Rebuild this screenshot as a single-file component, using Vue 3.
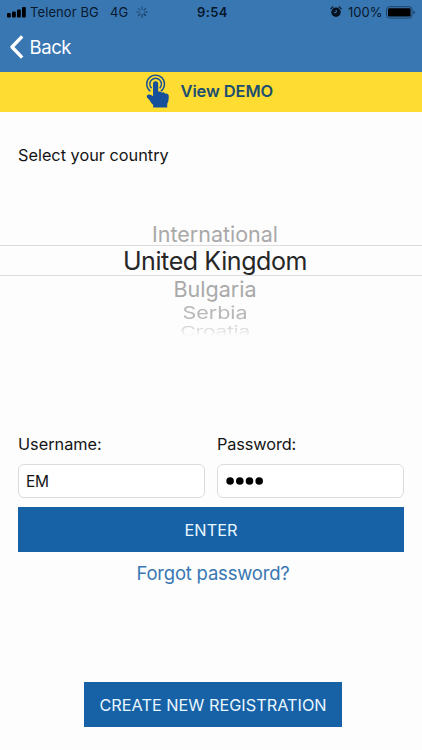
<script setup>
import { ref } from 'vue'

const countries = [
  { name: 'International', cls: 'above' },
  { name: 'United Kingdom', cls: 'selected' },
  { name: 'Bulgaria', cls: 'below' },
  { name: 'Serbia', cls: 'far' },
  { name: 'Croatia', cls: 'farthest' },
]
const username = ref('EM')
const spokes = [
  { angle: 0, opacity: 0.45 },
  { angle: 45, opacity: 0.5 },
  { angle: 90, opacity: 0.6 },
  { angle: 135, opacity: 0.8 },
  { angle: 180, opacity: 0.75 },
  { angle: 225, opacity: 0.6 },
  { angle: 270, opacity: 0.5 },
  { angle: 315, opacity: 0.35 },
]
</script>

<template>
  <div class="screen">
    <header class="top">
      <div class="status">
        <div class="carrier">
          <svg class="signal" width="19" height="11" viewBox="0 0 19 11">
            <rect x="0" y="6" width="3.8" height="4.4" rx="1" />
            <rect x="5" y="4.4" width="3.8" height="6" rx="1" />
            <rect x="10" y="2.4" width="3.8" height="8" rx="1" />
            <rect x="15" y="0" width="3.8" height="10.4" rx="1" />
          </svg>
          <span class="operator">Telenor BG</span>
          <span class="network">4G</span>
          <svg class="spinner" width="12" height="12" viewBox="-6 -6 12 12">
            <line
              v-for="s in spokes"
              :key="s.angle"
              x1="0" y1="-2.6" x2="0" y2="-5.2"
              stroke="#061426" stroke-width="1" stroke-linecap="round"
              :opacity="s.opacity"
              :transform="`rotate(${s.angle})`"
            />
          </svg>
        </div>
        <span class="clock">9:54</span>
        <div class="power">
          <svg class="alarm" width="12" height="12" viewBox="0 0 12 12">
            <circle cx="6" cy="6.2" r="4.7" fill="#07111d" />
            <path d="M0.9 2.7 L2.9 0.9 M11.1 2.7 L9.1 0.9" stroke="#07111d" stroke-width="1.2" stroke-linecap="round" />
            <path d="M6.2 3.8 V6.6 H4.1" fill="none" stroke="#3977b3" stroke-width="1" />
          </svg>
          <span class="percent">100%</span>
          <svg class="battery" width="30" height="13" viewBox="0 0 30 13">
            <rect x="0.5" y="0.7" width="25.6" height="11.4" rx="3" fill="none" stroke="#1d436b" stroke-width="1" />
            <rect x="2" y="2.2" width="22.6" height="8.4" rx="1.4" />
            <path d="M27.4 4.6 Q29 5.2 29 6.4 Q29 7.6 27.4 8.2 Z" fill="#1d436b" />
          </svg>
        </div>
      </div>
      <nav class="nav">
        <svg width="15" height="24" viewBox="0 0 15 24">
          <path d="M13.2 1.4 L3 12 L13.2 22.6" fill="none" stroke="#fff" stroke-width="3.4" stroke-linejoin="round" />
        </svg>
        <span class="back">Back</span>
      </nav>
    </header>

    <div class="demo">
      <svg class="tap" width="25" height="36" viewBox="0 0 25 36">
        <g fill="none" stroke="#17509a">
          <path d="M5.4 17.2 A8.9 8.9 0 1 1 15.8 17.2" stroke-width="1.4" />
          <path d="M6.6 14.2 A5.8 5.8 0 1 1 14.6 14.2" stroke-width="1.4" />
        </g>
        <path
          fill="#17509a"
          d="M8 10 Q8 7.3 10.6 7.3 Q13.2 7.3 13.2 10 V17.6 Q15.5 16.9 16.6 18.5 Q18.8 17.8 20 19.6 Q23.8 19.2 23.8 22.8 Q23.9 27 22.2 30 V33.6 H8.2 V31 Q5.8 28.8 4.2 25.8 L2 23.4 Q1.1 20.8 3.8 20.4 Q6 20.2 8 22.2 Z"
        />
      </svg>
      <span class="demo-text">View DEMO</span>
    </div>

    <main class="content">
      <p class="heading"><span>Select your country</span></p>
      <div class="picker">
        <div v-for="c in countries" :key="c.name" class="option" :class="c.cls">
          <span>{{ c.name }}</span>
        </div>
      </div>

      <form class="form" @submit.prevent>
        <label class="field">
          <span class="label user">Username:</span>
          <input v-model="username" class="input" type="text" />
        </label>
        <label class="field">
          <span class="label pass">Password:</span>
          <span class="input secret">
            <svg width="38" height="10" viewBox="0 0 38 10">
              <circle v-for="n in 4" :key="n" :cx="n * 9.7 - 5.6" cy="5" r="3.8" />
            </svg>
          </span>
        </label>
        <button class="enter" type="submit"><span>ENTER</span></button>
      </form>
      <a class="forgot"><span>Forgot password?</span></a>
      <button class="register"><span>CREATE NEW REGISTRATION</span></button>
    </main>
  </div>
</template>

<style>
body {
  margin: 0;
  background: #fdfdfd;
}
</style>

<style scoped>
.screen {
  width: 422px;
  height: 750px;
  overflow: hidden;
  box-sizing: border-box;
  display: flex;
  flex-direction: column;
  background: #fdfdfd;
  color: #141414;
  font-family: Inter, Roboto, sans-serif;
  white-space: nowrap;
}
.top {
  height: 72px;
  background: #3977b3;
}
.status {
  height: 24px;
  display: grid;
  grid-template-columns: 197px 1fr auto;
  align-items: center;
  color: #07182b;
  font-size: 13px;
  line-height: 24px;
}
.carrier {
  display: flex;
  align-items: center;
  padding-left: 7px;
}
.operator {
  margin-left: 4px;
  width: 80px;
  letter-spacing: 0.1px;
}
.network {
  width: 26px;
}
.clock {
  font-weight: 600;
  letter-spacing: 0.4px;
}
.power {
  display: flex;
  align-items: center;
  padding-right: 6px;
}
.percent {
  margin: 0 4px 0 6px;
  width: 34px;
}
.nav {
  height: 46px;
  display: flex;
  align-items: center;
  gap: 5.5px;
  padding-left: 9px;
  color: #fff;
  font-size: 18.5px;
  letter-spacing: -0.4px;
}
.demo {
  height: 39.5px;
  flex: none;
  display: flex;
  align-items: center;
  padding-left: 145px;
  background: #ffdc32;
  color: #1c4f70;
}
.demo-text {
  margin-left: 10.5px;
  margin-top: -1px;
  font-size: 16.5px;
  font-weight: 600;
  letter-spacing: -0.12px;
}
.content {
  flex: 1;
  display: flex;
  flex-direction: column;
}
.heading {
  margin: 31.5px 0 0 18px;
  height: 24px;
  line-height: 24px;
  font-size: 16.3px;
}
.picker {
  margin-top: 53px;
  height: 212px;
  display: flex;
  flex-direction: column;
  color: #a9a9a9;
}
.option {
  display: flex;
  justify-content: center;
  align-items: center;
  padding-left: 8px;
  font-size: 21.5px;
}
.option span {
  display: block;
}
.above {
  height: 25px;
}
.above span {
  padding-top: 2px;
}
.selected {
  height: 29px;
  border-top: 1px solid #dcdcdc;
  border-bottom: 1px solid #dcdcdc;
  color: #262626;
  font-size: 25px;
  letter-spacing: -0.4px;
  overflow: hidden;
}
.below {
  height: 26px;
}
.far {
  height: 22px;
  color: #b8b8b8;
}
.far span {
  transform: scaleY(0.78);
}
.farthest {
  height: 14px;
  color: #cdcdcd;
  overflow: hidden;
  letter-spacing: -0.5px;
  -webkit-mask-image: linear-gradient(#000 10%, transparent 85%);
  mask-image: linear-gradient(#000 10%, transparent 85%);
}
.farthest span {
  transform: scaleY(0.6);
}
.form {
  display: grid;
  grid-template-columns: 187px 187px;
  column-gap: 12px;
  row-gap: 9px;
  padding-left: 18px;
}
.field {
  display: flex;
  flex-direction: column;
}
.label {
  height: 24px;
  line-height: 24px;
  margin-bottom: 8px;
  font-size: 16.3px;
}
.pass {
  letter-spacing: -0.1px;
}
.input {
  box-sizing: border-box;
  width: 187px;
  height: 34px;
  border: 1px solid #dcdcde;
  border-radius: 6px;
  padding: 0 7px;
  background: #fff;
  color: #141414;
  font: 15.5px Inter, Roboto, sans-serif;
  letter-spacing: -0.2px;
  outline: none;
}
.secret {
  display: flex;
  align-items: center;
  padding-left: 8px;
}
.enter,
.register {
  border: 0;
  padding: 0;
  height: 45px;
  background: #1761a6;
  color: #e8f7ff;
  font: 16.3px Inter, Roboto, sans-serif;
}
.enter {
  grid-column: 1 / 3;
}
.forgot {
  margin-top: 9px;
  height: 24px;
  line-height: 24px;
  padding-left: 4px;
  text-align: center;
  color: #3977b3;
  font-size: 18.5px;
  letter-spacing: -0.2px;
}
.register {
  align-self: center;
  width: 258px;
  margin: 97px 0 0 4px;
}
</style>
